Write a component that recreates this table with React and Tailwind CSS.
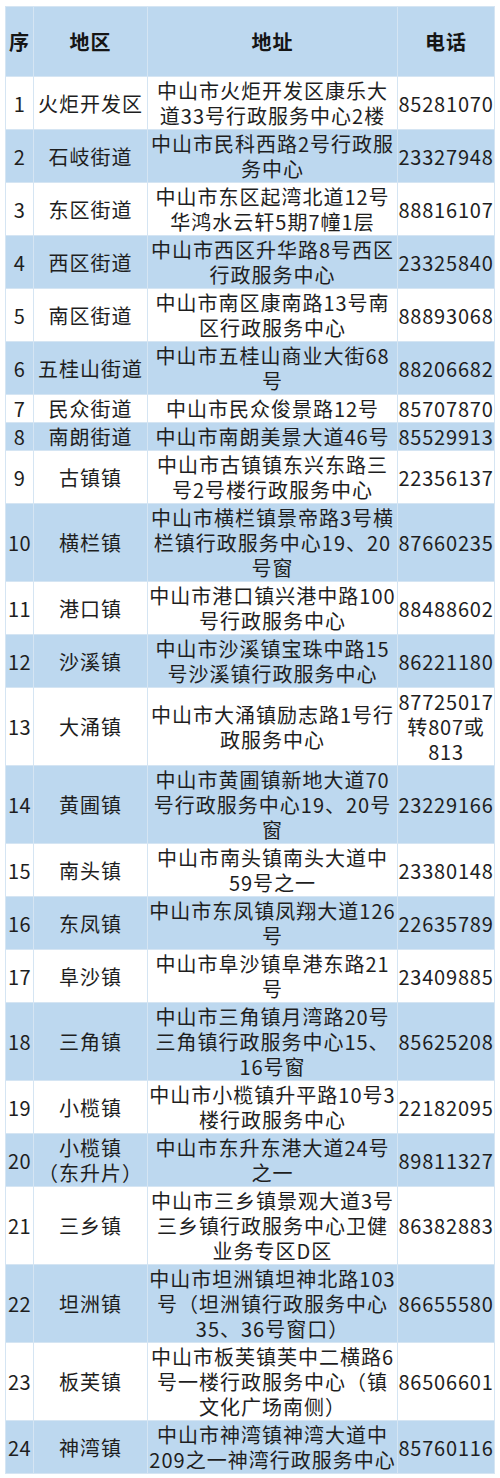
import React from 'react';

const rows = [
  ['1', ['火炬开发区'], ['中山市火炬开发区康乐大', '道33号行政服务中心2楼'], ['85281070']],
  ['2', ['石岐街道'], ['中山市民科西路2号行政服', '务中心'], ['23327948']],
  ['3', ['东区街道'], ['中山市东区起湾北道12号', '华鸿水云轩5期7幢1层'], ['88816107']],
  ['4', ['西区街道'], ['中山市西区升华路8号西区', '行政服务中心'], ['23325840']],
  ['5', ['南区街道'], ['中山市南区康南路13号南', '区行政服务中心'], ['88893068']],
  ['6', ['五桂山街道'], ['中山市五桂山商业大街68', '号'], ['88206682']],
  ['7', ['民众街道'], ['中山市民众俊景路12号'], ['85707870']],
  ['8', ['南朗街道'], ['中山市南朗美景大道46号'], ['85529913']],
  ['9', ['古镇镇'], ['中山市古镇镇东兴东路三', '号2号楼行政服务中心'], ['22356137']],
  ['10', ['横栏镇'], ['中山市横栏镇景帝路3号横', '栏镇行政服务中心19、20', '号窗'], ['87660235']],
  ['11', ['港口镇'], ['中山市港口镇兴港中路100', '号行政服务中心'], ['88488602']],
  ['12', ['沙溪镇'], ['中山市沙溪镇宝珠中路15', '号沙溪镇行政服务中心'], ['86221180']],
  ['13', ['大涌镇'], ['中山市大涌镇励志路1号行', '政服务中心'], ['87725017', '转807或', '813']],
  ['14', ['黄圃镇'], ['中山市黄圃镇新地大道70', '号行政服务中心19、20号', '窗'], ['23229166']],
  ['15', ['南头镇'], ['中山市南头镇南头大道中', '59号之一'], ['23380148']],
  ['16', ['东凤镇'], ['中山市东凤镇凤翔大道126', '号'], ['22635789']],
  ['17', ['阜沙镇'], ['中山市阜沙镇阜港东路21', '号'], ['23409885']],
  ['18', ['三角镇'], ['中山市三角镇月湾路20号', '三角镇行政服务中心15、', '16号窗'], ['85625208']],
  ['19', ['小榄镇'], ['中山市小榄镇升平路10号3', '楼行政服务中心'], ['22182095']],
  ['20', ['小榄镇', '（东升片）'], ['中山市东升东港大道24号', '之一'], ['89811327']],
  ['21', ['三乡镇'], ['中山市三乡镇景观大道3号', '三乡镇行政服务中心卫健', '业务专区D区'], ['86382883']],
  ['22', ['坦洲镇'], ['中山市坦洲镇坦神北路103', '号（坦洲镇行政服务中心', '35、36号窗口）'], ['86655580']],
  ['23', ['板芙镇'], ['中山市板芙镇芙中二横路6', '号一楼行政服务中心（镇', '文化广场南侧）'], ['86506601']],
  ['24', ['神湾镇'], ['中山市神湾镇神湾大道中', '209之一神湾行政服务中心'], ['85760116']],
];

const Lines = ({ items }) =>
  items.map((t, i) => (
    <div key={i} className="whitespace-nowrap">
      {t}
    </div>
  ));

const border = 'border border-[#d5e5f3] text-center align-middle px-0';
const td = `${border} py-px`;
const th = `${border} py-[22px]`;

export default function App() {
  return (
    <div
      className="bg-white w-[500px] min-h-[1478px] pt-[6px] pl-[5px]"
      style={{ fontFamily: '"Noto Sans CJK SC", "Noto Sans", sans-serif' }}
    >
      <table className="table-fixed border-collapse w-[489px] text-[20px] leading-[25px] tracking-[1px] text-[#1e1e1e]">
        <colgroup>
          <col className="w-[28px]" />
          <col className="w-[114px]" />
          <col className="w-[250px]" />
          <col className="w-[97px]" />
        </colgroup>
        <thead>
          <tr className="bg-[#bdd8ef] font-bold text-[#151515]">
            <th className={th}>序</th>
            <th className={th}>地区</th>
            <th className={th}>地址</th>
            <th className={th}>电话</th>
          </tr>
        </thead>
        <tbody>
          {rows.map(([no, region, addr, phone], i) => (
            <tr key={no} className={i % 2 === 0 ? 'bg-white' : 'bg-[#bdd8ef]'}>
              <td className={`${td} tracking-[0.5px]`}>{no}</td>
              <td className={td}>
                <Lines items={region} />
              </td>
              <td className={td}>
                <Lines items={addr} />
              </td>
              <td className={`${td} tracking-[0.8px]`}>
                <Lines items={phone} />
              </td>
            </tr>
          ))}
        </tbody>
      </table>
    </div>
  );
}
